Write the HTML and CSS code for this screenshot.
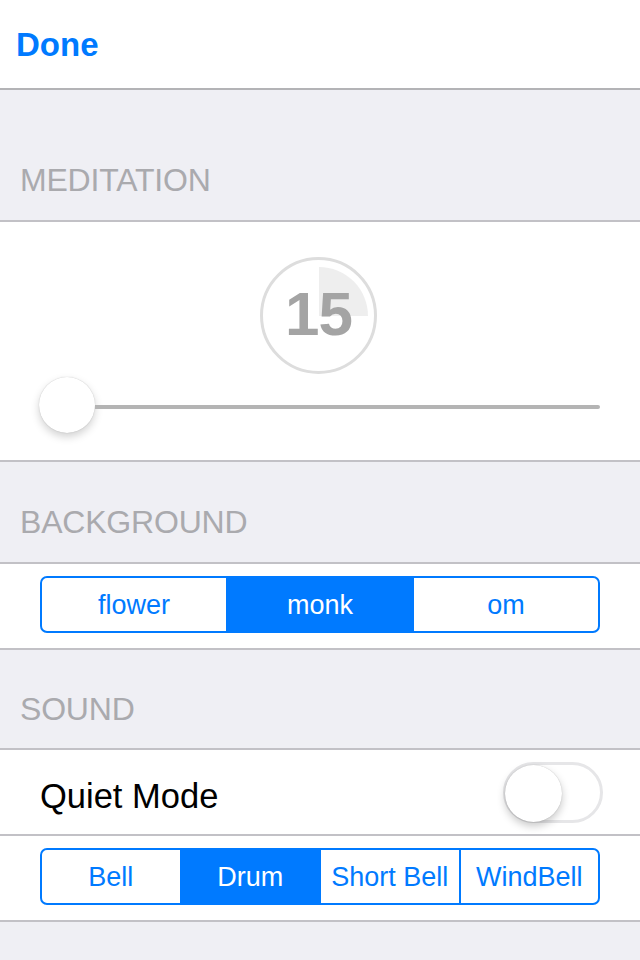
FILE: index.html
```html
<!DOCTYPE html>
<html>
<head>
<meta charset="utf-8">
<link rel="stylesheet" href="styles.css">
</head>
<body>
<div class="page">
  <header class="nav"><span class="done">Done</span></header>

  <div class="section-header meditation-head"><span>MEDITATION</span></div>
  <div class="cell meditation-cell">
    <div class="timer">
      <div class="pie"><span class="minutes">15</span></div>
    </div>
    <div class="slider">
      <div class="thumb"></div>
      <div class="track"></div>
    </div>
  </div>

  <div class="section-header background-head"><span>BACKGROUND</span></div>
  <div class="cell segment-cell">
    <div class="segmented">
      <div class="seg">flower</div>
      <div class="seg selected">monk</div>
      <div class="seg">om</div>
    </div>
  </div>

  <div class="section-header sound-head"><span>SOUND</span></div>
  <div class="cell toggle-cell">
    <span class="label">Quiet Mode</span>
    <div class="switch"><div class="knob"></div></div>
  </div>
  <div class="cell segment-cell">
    <div class="segmented">
      <div class="seg">Bell</div>
      <div class="seg selected">Drum</div>
      <div class="seg">Short Bell</div>
      <div class="seg">WindBell</div>
    </div>
  </div>
</div>
</body>
</html>
```

FILE: styles.css
```css
* { box-sizing: border-box; }
html, body {
  margin: 0;
  padding: 0;
  background: #efeff4;
  font-family: "Liberation Sans", Arial, sans-serif;
}
.page {
  width: 640px;
  min-height: 960px;
  background: #efeff4;
}
.nav {
  height: 90px;
  background: #ffffff;
  border-bottom: 2px solid #b3b3b6;
  display: flex;
  align-items: center;
  padding-left: 16px;
}
.done {
  color: #007aff;
  font-size: 33px;
  font-weight: bold;
  line-height: 1;
}
.section-header {
  display: flex;
  align-items: flex-end;
  padding-left: 20px;
  padding-bottom: 24px;
  border-bottom: 2px solid #c2c1c6;
}
.section-header span {
  font-size: 32px;
  line-height: 32px;
  letter-spacing: -0.2px;
  color: #aaaaae;
}
.meditation-head { height: 132px; }
.background-head { height: 102px; }
.sound-head { height: 100px; padding-bottom: 23px; }

.cell {
  background: #ffffff;
  border-bottom: 2px solid #c2c1c6;
}
.meditation-cell {
  height: 240px;
  padding-top: 35px;
  display: flex;
  flex-direction: column;
}
.timer {
  width: 117px;
  height: 117px;
  margin-left: 260px;
  border: 3px solid #dddddd;
  border-radius: 50%;
  display: flex;
  align-items: center;
  justify-content: center;
}
.pie {
  width: 98px;
  height: 98px;
  border-radius: 50%;
  background: conic-gradient(#eeeeee 0 25%, transparent 0);
  display: flex;
  align-items: center;
  justify-content: center;
}
.minutes {
  font-size: 62px;
  font-weight: bold;
  color: #a4a4a4;
  letter-spacing: -1px;
  line-height: 1;
  margin-top: -3px;
}
.slider {
  margin-top: 3px;
  height: 56px;
  padding: 0 40px 0 39px;
  display: flex;
  align-items: center;
}
.thumb {
  width: 56px;
  height: 56px;
  flex: none;
  border-radius: 50%;
  background: #ffffff;
  box-shadow: 0 4px 8px rgba(0, 0, 0, 0.18), 0 0 1px rgba(0, 0, 0, 0.25);
}
.track {
  flex: 1;
  height: 4px;
  margin-top: 4px;
  background: #b4b4b4;
  border-radius: 0 2px 2px 0;
}

.segment-cell {
  height: 86px;
  padding: 12px 40px 0 40px;
}
.segmented {
  height: 57px;
  display: flex;
  border: 2px solid #007aff;
  border-radius: 7px;
  overflow: hidden;
}
.seg {
  flex: 1;
  display: flex;
  align-items: center;
  justify-content: center;
  color: #007aff;
  font-size: 27px;
  padding-top: 2px;
  border-left: 2px solid #007aff;
}
.seg:first-child { border-left: none; }
.seg.selected {
  background: #007aff;
  color: #ffffff;
}

.toggle-cell {
  height: 86px;
  padding: 0 37px 0 40px;
  display: flex;
  align-items: center;
  justify-content: space-between;
}
.label {
  font-size: 34.5px;
  color: #000000;
  margin-top: 8px;
}
.switch {
  width: 100px;
  height: 61px;
  border: 3px solid #e6e6e8;
  border-radius: 31px;
  display: flex;
  align-items: center;
}
.knob {
  width: 57px;
  height: 57px;
  margin-left: -1px;
  margin-top: 2px;
  border-radius: 50%;
  background: #ffffff;
  box-shadow: 0 4px 8px rgba(0, 0, 0, 0.22), 0 0 1px rgba(0, 0, 0, 0.25);
}
```
